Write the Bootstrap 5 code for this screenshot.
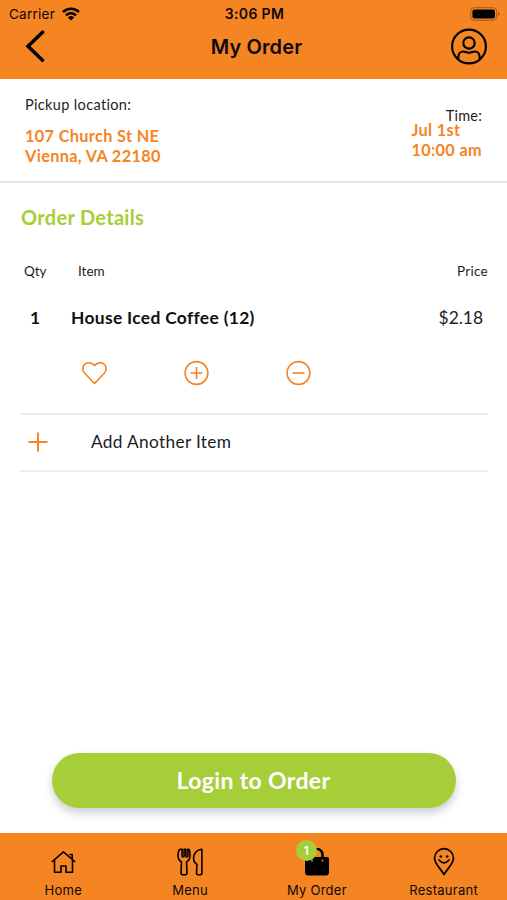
<!DOCTYPE html>
<html lang="en">
<head>
<meta charset="utf-8">
<meta name="viewport" content="width=device-width, initial-scale=1">
<title>My Order</title>
<link href="https://cdn.jsdelivr.net/npm/bootstrap@5.3.0/dist/css/bootstrap.min.css" rel="stylesheet">
<style>
  :root { --orange: #f58423; --green: #a6ce39; --rule: #e5e5e7; }
  body { font-family: Lato, "Noto Sans", sans-serif; color: #1d1d1f; background: #fff; line-height: 20px; }
  svg { display: block; flex: none; }
  .app { height: 900px; overflow: hidden; }
  .bar { background: var(--orange); color: #0c0a08; font-family: Inter, sans-serif; }
  .top-bar { height: 79px; }
  .side { flex: 1 1 0; }
  .status { height: 27px; padding: 0 7px 0 9px; font-size: 13.5px; }
  .carrier { letter-spacing: .25px; margin-right: -1px; }
  .clock { font-size: 14px; letter-spacing: .35px; }
  .title-row { height: 40px; padding: 0 19px 0 25px; }
  .title { font-size: 20px; letter-spacing: .1px; }
  .pickup { height: 104px; padding: 16px 25px 0; border-bottom: 2px solid var(--rule); }
  .caption { font-size: 14.5px; letter-spacing: .35px; }
  .time .caption { letter-spacing: .2px; }
  .accent { color: var(--orange); font-size: 16.3px; letter-spacing: .35px; }
  .address { margin-top: 11px; }
  .time { padding-top: 11px; }
  .when { margin-top: -6px; }
  .details { padding: 22px 19px 0 20px; }
  .details-title { color: var(--green); font-size: 20px; letter-spacing: .3px; padding-left: 1px; }
  .heads { margin-top: 32px; font-size: 13.5px; padding-left: 4px; }
  .heads .ms-auto { letter-spacing: .3px; }
  .qty { width: 54px; }
  .line { margin-top: 27px; font-size: 17.4px; padding: 0 5px 0 10px; }
  .line-qty { width: 41px; }
  .line b { color: #111; letter-spacing: .33px; }
  .tools { margin-top: 32px; gap: 76px; padding-left: 61px; height: 53px; color: var(--orange); }
  .add { height: 59px; border-top: 2px solid #ececee; border-bottom: 2px solid #ececee; font-size: 17.3px; padding: 0 0 1px 8px; }
  .add span { margin-left: 43px; letter-spacing: .33px; }
  .login { width: 404px; height: 55px; background: var(--green); color: #fff; font-size: 23px; letter-spacing: .35px; box-shadow: 0 5px 9px rgba(40,50,60,.24); margin-bottom: 25px; }
  .tabs { height: 67px; }
  .tab { flex: 1 1 0; padding-top: 14px; letter-spacing: .27px; }
  .glyph { height: 30px; }
  .tab small { font-size: 13px; line-height: 16px; margin-top: 5px; }
  .count { left: -8px; top: -7px; width: 21px; height: 21px; background: var(--green); color: #fff; font-size: 12px; }
</style>
</head>
<body>
<div class="app d-flex flex-column">
  <header class="bar top-bar">
    <div class="status d-flex align-items-center">
      <div class="side d-flex align-items-center gap-2"><span class="carrier">Carrier</span>
        <svg width="18" height="14" viewBox="0 0 18 14" fill="none" stroke="#000" stroke-width="2.5"><path d="M1 5a11.5 11.5 0 0 1 16 0M4 8.3a7.2 7.2 0 0 1 10 0"/><path d="M9 13.5 5.900 10.500a4.500 4.500 0 0 1 6.200 0z" fill="#000" stroke="none"/></svg>
      </div>
      <div class="clock fw-semibold">3:06 PM</div>
      <div class="side d-flex justify-content-end">
        <svg width="30" height="14" viewBox="0 0 30 14"><rect x=".7" y=".7" width="26" height="12.600" rx="3.500" fill="none" stroke="#a65a1b"/><rect x="2.400" y="2.400" width="22.600" height="9.200" rx="2" fill="#000"/><path d="M28 5v4q1.600-.5 1.600-2T28 5" fill="#a65a1b"/></svg>
      </div>
    </div>
    <div class="title-row d-flex align-items-center">
      <div class="side"><svg width="20" height="34" viewBox="0 0 20 34" fill="none" stroke="#000" stroke-width="3.500" stroke-linecap="round"><path d="M17.500 2.200 3 16.200 17.500 30.200"/></svg></div>
      <h1 class="title fw-semibold m-0">My Order</h1>
      <div class="side d-flex justify-content-end"><svg width="38" height="38" viewBox="0 0 38 38" fill="none" stroke="#000" stroke-width="2.200"><circle cx="19" cy="18.500" r="16.900"/><circle cx="19" cy="15" r="5.700"/><path d="M8.300 31.500V29c0-3.500 2.200-5.500 5-5.500 2 0 3 1.300 5.700 1.300s3.700-1.300 5.700-1.300c2.800 0 5 2 5 5.500v2.500"/></svg></div>
    </div>
  </header>

  <main class="flex-grow-1 d-flex flex-column">
    <section class="pickup d-flex justify-content-between">
      <div>
        <div class="caption">Pickup location:</div>
        <div class="accent address fw-bold">107 Church St NE<br>Vienna, VA 22180</div>
      </div>
      <div class="time">
        <div class="caption text-end">Time:</div>
        <div class="accent when fw-bold">Jul 1st<br>10:00 am</div>
      </div>
    </section>

    <section class="details">
      <h2 class="details-title fw-bold m-0">Order Details</h2>
      <div class="heads d-flex"><span class="qty">Qty</span><span>Item</span><span class="ms-auto">Price</span></div>
      <div class="line d-flex"><b class="line-qty">1</b><b class="item-name">House Iced Coffee (12)</b><span class="ms-auto price">$2.18</span></div>
      <div class="tools d-flex align-items-start">
        <svg width="26" height="26" viewBox="0 0 26 26" fill="none" stroke="currentColor" stroke-width="1.600" stroke-linejoin="round"><path d="M13.500 23.500 3.700 13.200C-.4 8.500 3 2.700 7.700 2.700c2.600 0 4.500 1.300 5.800 2.900 1.300-1.600 3.200-2.900 5.800-2.900 4.700 0 8.100 5.800 4 10.500z"/></svg>
        <svg width="26" height="26" viewBox="0 0 26 26" fill="none" stroke="currentColor" stroke-width="1.600"><circle cx="13.500" cy="13" r="11.400"/><path d="M7.500 13h12M13.500 7v12"/></svg>
        <svg width="26" height="26" viewBox="0 0 26 26" fill="none" stroke="currentColor" stroke-width="1.600"><circle cx="13.500" cy="13" r="11.400"/><path d="M7.500 13h12"/></svg>
      </div>
      <div class="add d-flex align-items-center">
        <svg width="20" height="20" viewBox="0 0 20 20" stroke="#f58423" stroke-width="2"><path d="M.5 10h19M10 .5v19"/></svg>
        <span class="add-label">Add Another Item</span>
      </div>
    </section>

    <button type="button" class="login btn rounded-pill border-0 fw-bold mt-auto mx-auto">Login to Order</button>
  </main>

  <nav class="bar tabs d-flex">
    <div class="tab d-flex flex-column align-items-center">
      <div class="glyph d-flex align-items-center"><svg width="26" height="26" viewBox="0 0 26 26" fill="none" stroke="#000" stroke-width="1.600" stroke-linecap="round" stroke-linejoin="round"><path d="M2.300 12.500 13.500 2.800l11.200 9.700M4.500 11v12.200H11V17h5v6.200h6.500V11M20 5.500h2.200v4.500"/></svg></div>
      <small>Home</small>
    </div>
    <div class="tab d-flex flex-column align-items-center">
      <div class="glyph d-flex align-items-center"><svg width="28" height="30" viewBox="0 0 28 30" fill="none" stroke="#000" stroke-width="1.600" stroke-linejoin="round"><path d="M4.300 2.200h1.800V9q0 1 1 1t1-1V2.200h1.800V9q0 1 1 1t1-1V2.200h.9q1.200 1.500 1.200 6.300 0 4.500-3.500 6.500l.5 10.500Q11 28 8 28t-3-2.500L5.500 15Q2 13 2 8.500q0-4.800 2.300-6.300zM20.900 17.500c-6-4-3.500-14.500 5-15.300V26q0 2-2.700 2t-2.700-2z"/></svg></div>
      <small>Menu</small>
    </div>
    <div class="tab d-flex flex-column align-items-center">
      <div class="glyph position-relative d-flex align-items-center">
        <svg width="26" height="28" viewBox="0 0 26 28"><path d="M3 9h20q2 0 2 2v13q0 3.500-3 3.500H4Q1 27.500 1 24V11q0-2 2-2z"/><path d="M7.500 11V6.500a5.500 5.500 0 0 1 11 0V11" fill="none" stroke="#000" stroke-width="2.600"/><path d="M8 11.500v2M18.500 11.500v2" stroke="#f58423" stroke-width="1.600"/></svg>
        <span class="count position-absolute rounded-circle d-flex align-items-center justify-content-center fw-semibold">1</span>
      </div>
      <small>My Order</small>
    </div>
    <div class="tab d-flex flex-column align-items-center">
      <div class="glyph d-flex align-items-center"><svg width="24" height="30" viewBox="0 0 24 30" fill="none" stroke="#000" stroke-width="1.700" stroke-linejoin="round"><path d="M12 27.500C8.500 21.500 2.500 16.500 2.500 11.200a9.500 9.500 0 0 1 19 0C21.500 16.500 15.500 21.500 12 27.500z"/><path d="M7 13q5 5.800 10 0" stroke-linecap="round"/><circle cx="8.800" cy="9.500" r="1.300" fill="#000" stroke="none"/><circle cx="15.200" cy="9.500" r="1.300" fill="#000" stroke="none"/></svg></div>
      <small>Restaurant</small>
    </div>
  </nav>
</div>
<script src="https://cdn.jsdelivr.net/npm/bootstrap@5.3.0/dist/js/bootstrap.bundle.min.js"></script>
</body>
</html>
